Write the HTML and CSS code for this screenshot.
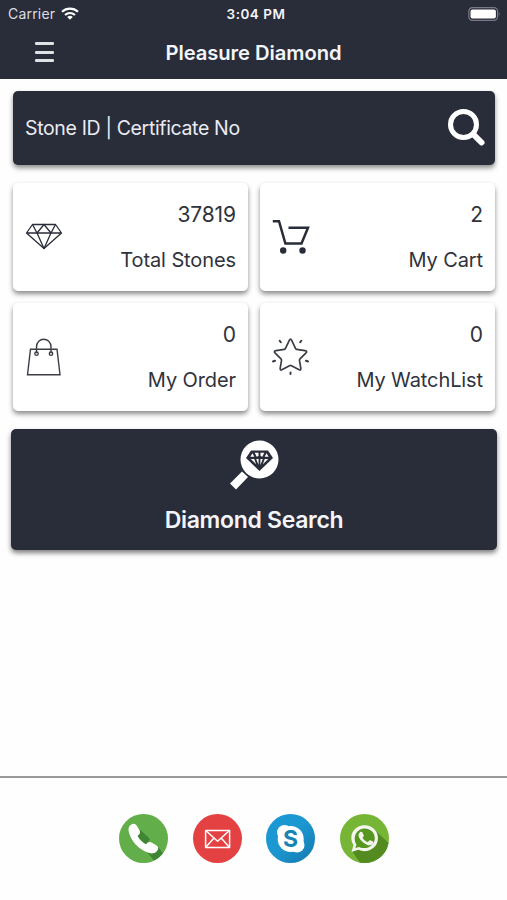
FILE: index.html
```html
<!DOCTYPE html>
<html lang="en">
<head>
    <meta charset="UTF-8">
    <meta name="viewport" content="width=device-width, initial-scale=1">
    <title>Pleasure Diamond</title>
    <link rel="stylesheet" href="styles.css">
</head>
<body>
    <header class="header">
        <div class="status">
            <div class="carrier">
                <span>Carrier</span>
                <svg width="18" height="13" viewBox="0 0 18 13" fill="none" stroke="#fff" stroke-width="2.2">
                    <path d="M1 4.7C5.6.6 12.4.6 17 4.7"/>
                    <path d="M4 8C7 5.4 11 5.4 14 8"/>
                    <path d="M6.2 10Q9 7.7 11.8 10L9 12.8Z" fill="#fff" stroke="none"/>
                </svg>
            </div>
            <span class="time">3:04 PM</span>
            <svg class="battery" width="33" height="14" viewBox="0 0 33 14">
                <rect x=".8" y=".7" width="28.8" height="12.6" rx="3.6" fill="none" stroke="#777a84" stroke-width="1.2"/>
                <rect x="2.5" y="2.4" width="25.4" height="9.2" rx="2" fill="#fff"/>
                <path d="M30.8 4.8Q32.6 7 30.8 9.2Z" fill="#777a84"/>
            </svg>
        </div>
        <div class="navbar">
            <button class="menu"><i></i><i></i><i></i></button>
            <h1>Pleasure Diamond</h1>
        </div>
    </header>

    <main>
        <div class="search">
            <span>Stone ID | Certificate No</span>
            <svg width="40" height="40" viewBox="0 0 40 40" fill="none" stroke="#fff">
                <circle cx="16.5" cy="16.5" r="13" stroke-width="5"/>
                <path d="M26.5 26.5L34.5 34.5" stroke-width="6" stroke-linecap="round"/>
            </svg>
        </div>

        <div class="cards">
            <div class="card">
                <svg width="38" height="38" viewBox="0 0 38 38" fill="none" stroke="#292d39" stroke-width="1.3" stroke-linejoin="round">
                    <path d="M7.5 6.5H30.5L36.5 15L19 30.5L1.5 15ZM1.5 15H36.5"/>
                    <path d="M7.5 6.5L12 15L19 30.5L26 15L30.5 6.5M12 15L19 6.5L26 15"/>
                </svg>
                <div class="info">
                    <span class="count">37819</span>
                    <span>Total Stones</span>
                </div>
            </div>
            <div class="card">
                <svg width="38" height="38" viewBox="0 0 38 38" fill="none" stroke="#292d39" stroke-width="2.5">
                    <path d="M.8 3.2H7L13.4 25.5H29.5L36 9.8H16.5"/>
                    <g fill="#292d39" stroke="none">
                        <circle cx="11.2" cy="32.5" r="3.2"/>
                        <circle cx="30.5" cy="32.5" r="3.2"/>
                    </g>
                </svg>
                <div class="info">
                    <span class="count">2</span>
                    <span>My Cart</span>
                </div>
            </div>
            <div class="card">
                <svg width="38" height="38" viewBox="0 0 38 38" fill="none" stroke="#3b3e47" stroke-width="1.4">
                    <path d="M5.5 11.2H32L35 36.7H2.5Z"/>
                    <path d="M11.5 15.2V9C11.5-1.4 26-1.4 26 9V15.2"/>
                    <circle cx="11.5" cy="15.7" r="1.7"/>
                    <circle cx="26" cy="15.7" r="1.7"/>
                </svg>
                <div class="info">
                    <span class="count">0</span>
                    <span>My Order</span>
                </div>
            </div>
            <div class="card">
                <svg width="38" height="38" viewBox="0 0 38 38" fill="none" stroke="#3b3e47" stroke-width="1.7" stroke-linejoin="round" stroke-linecap="round">
                    <path d="M17.3 2.4Q18.5 0 19.7 2.4L23.5 10.4Q23.8 11.2 24.7 11.3L33 12.6Q35.8 13.1 33.8 15.1L28 20.9Q27.3 21.6 27.5 22.6L28.8 30.1Q29.2 32.9 26.7 31.6L19.5 27.7Q18.5 27.2 17.5 27.7L10.3 31.6Q7.8 32.9 8.2 30.1L9.5 22.6Q9.7 21.6 9 20.9L3.2 15.1Q1.2 13.1 4 12.6L12.3 11.3Q13.2 11.2 13.5 10.4Z"/>
                    <path d="M7.7 2.7L8.8 4.3M29.3 2.7L28.2 4.3M1 23.5L3 22.7M36 23.5L34 22.7M18.5 34.4V36" stroke-width="2"/>
                </svg>
                <div class="info">
                    <span class="count">0</span>
                    <span>My WatchList</span>
                </div>
            </div>
        </div>

        <div class="diamond-search">
            <svg width="50" height="50" viewBox="0 0 50 50">
                <circle cx="30.5" cy="19.5" r="19" fill="#fff"/>
                <path d="M1 43.5L13 31.5L19 37L7 49.5Z" fill="#fff"/>
                <path d="M22 10.5H39L44 18L30.5 31L17 18Z" fill="#292d39"/>
                <path d="M21.3 16.8L23.5 13.2L25.3 16.8ZM39.7 16.8L37.5 13.2L35.7 16.8ZM25.7 12.7H29.5V16L27.7 16.8ZM35.3 12.7H31.5V16L33.3 16.8ZM21.8 19H25.2L27.2 24.3ZM39.2 19H35.8L33.8 24.3ZM27.2 19H29.6V25ZM33.8 19H31.4V25Z" fill="#fff"/>
            </svg>
            <h2>Diamond Search</h2>
        </div>
    </main>

    <footer class="footer">
        <svg width="49" height="49" viewBox="0 0 49 49">
            <circle cx="24.5" cy="24.5" r="24.5" fill="#62ae4b"/>
            <path d="M21 15.5L31 25L27 31L18 22Z" fill="#3f8534"/>
            <path d="M38.5 32L43.9 39.5A24.5 24.5 0 0 1 35 46.6L28 38Z" fill="#3f8534"/>
            <path d="M11.2 11.3C13.8 8.9 16 9.2 18 12L20.5 16.3C21.7 18.5 21.2 20 18.6 21.7C20 25.5 23.3 28.6 27 30.2C29.2 27.5 30.7 27.4 33 28.7L37.6 31.5C40.2 33.3 39.5 35.8 37 38C34.5 40.1 31.1 39.8 27.4 38C19.2 34.2 12.8 27.6 10.2 19.4C9.1 15.8 9.2 13.2 11.2 11.3Z" fill="#fff"/>
        </svg>
        <svg width="49" height="49" viewBox="0 0 49 49">
            <circle cx="24.5" cy="24.5" r="24.5" fill="#e44143"/>
            <g fill="none" stroke="#fff" stroke-width="1.5" stroke-linejoin="round">
                <rect x="12.6" y="16.4" width="24" height="17"/>
                <path d="M13 16.8L24.6 27.3L36.2 16.8M13 33L20.8 24.2M36.2 33L28.4 24.2"/>
            </g>
        </svg>
        <svg width="49" height="49" viewBox="0 0 49 49">
            <defs>
                <linearGradient id="sky" x1="0" y1="0" x2="1" y2="1">
                    <stop offset="0" stop-color="#1b9ad6"/>
                    <stop offset=".5" stop-color="#1b96d0"/>
                    <stop offset="1" stop-color="#1577ac"/>
                </linearGradient>
            </defs>
            <circle cx="24.5" cy="24.5" r="24.5" fill="url(#sky)"/>
            <g fill="#fff">
                <circle cx="24.7" cy="25" r="13"/>
                <circle cx="18.5" cy="18.5" r="7.5"/>
                <circle cx="31" cy="31" r="7.5"/>
            </g>
            <text class="skype-s" x="24.5" y="33.1" text-anchor="middle">S</text>
        </svg>
        <svg width="49" height="49" viewBox="0 0 49 49">
            <circle cx="24.5" cy="24.5" r="24.5" fill="#76b536"/>
            <path d="M33.6 15L48.6 29A24.5 24.5 0 0 1 20 48.6L12 37.2Z" fill="#538b20"/>
            <path d="M11.5 38L13.5 31C7.8 21.5 14.2 11.2 24.7 11.2C32.2 11.2 38 17 38 24C38 34.2 27.2 40 18.3 35.8Z" fill="#f3f5ee"/>
            <path d="M15.4 34L16.5 30.5C12 23 16.8 14.4 24.7 14.4C30.4 14.4 34.8 18.7 34.8 24C34.8 32 26.2 36.4 19 32.9Z" fill="#579720"/>
            <path d="M20 18.2C21.2 17.4 22.2 17.7 22.7 18.9L23.7 21.3C24 22.1 23.3 23 22.5 23.8C24 26.3 25.7 27.4 27.8 28.2L29.4 26.5C29.8 26.1 30.2 26.1 30.8 26.4L33 27.5C33.8 28 33.4 29.7 32.3 30.6C29.7 32.5 25.5 30.6 22.4 27.7C18.6 24.2 17.3 20.5 20 18.2Z" fill="#f3f5ee"/>
        </svg>
    </footer>
</body>
</html>
```
FILE: styles.css
```css
* {
    box-sizing: border-box;
}
body {
    display: flex;
    flex-direction: column;
    height: 900px;
    margin: 0;
    background: #fefefe;
    color: #30333c;
    font-family: Inter, "Liberation Sans", sans-serif;
}
svg {
    display: block;
    flex: none;
}
.header {
    height: 79px;
    background: #292d39;
    color: #f4f5fa;
}
.status {
    display: grid;
    grid-template-columns: 1fr auto 1fr;
    align-items: center;
    height: 27px;
    padding: 0 6px 0 8px;
    font-size: 13.5px;
}
.carrier {
    display: flex;
    align-items: center;
    gap: 6px;
    color: #dcdee5;
    font-size: 14px;
    letter-spacing: .2px;
}
.time {
    padding-left: 3px;
    font-weight: 600;
    letter-spacing: .5px;
}
.battery {
    justify-self: end;
}
.navbar {
    display: grid;
    grid-template-columns: 80px 1fr 80px;
    align-items: center;
    height: 50px;
}
.menu {
    display: flex;
    flex-direction: column;
    gap: 5.2px;
    width: 19px;
    margin: 0 0 0 35px;
    padding: 0;
    border: none;
    background: none;
}
.menu i {
    width: 19px;
    height: 3px;
    border-radius: 1px;
    background: #dfe2e5;
}
h1, h2 {
    margin: 0;
    font-weight: 600;
    text-align: center;
}
h1 {
    font-size: 20.2px;
    letter-spacing: -.05px;
}
main {
    flex: 1;
    padding: 12px 12px 0 13px;
}
.search {
    display: flex;
    align-items: center;
    justify-content: space-between;
    height: 74px;
    padding: 0 8px 0 12px;
    border-radius: 5px;
    background: #292d39;
    box-shadow: 0 3px 5px rgba(0, 0, 0, .45);
    color: #e9ebf3;
    font-size: 19.5px;
    letter-spacing: -.35px;
}
.cards {
    display: grid;
    grid-template-columns: 1fr 1fr;
    gap: 12px;
    margin-top: 18px;
}
.card {
    display: flex;
    align-items: center;
    justify-content: space-between;
    height: 108px;
    padding: 0 12px;
    border-radius: 5px;
    background: #fff;
    box-shadow: 0 3px 5px rgba(0, 0, 0, .45);
}
.info {
    display: flex;
    flex-direction: column;
    gap: 21px;
    font-size: 20px;
    line-height: 24px;
    letter-spacing: -.1px;
    text-align: right;
}
.count {
    font-size: 21px;
}
.diamond-search {
    display: flex;
    flex-direction: column;
    align-items: center;
    height: 121px;
    margin: 18px -2px 0;
    padding-top: 11px;
    border-radius: 5px;
    background: #292d39;
    box-shadow: 0 3px 5px rgba(0, 0, 0, .5);
    color: #f4f5fa;
}
h2 {
    margin-top: 16px;
    font-size: 23px;
    line-height: 28px;
    letter-spacing: -.3px;
}
.footer {
    display: flex;
    justify-content: center;
    gap: 24.4px;
    height: 124px;
    padding: 36px 0 0 1px;
    border-top: 2px solid #999;
}
.skype-s {
    fill: #1784b4;
    font-size: 23px;
    font-weight: 700;
}
```
